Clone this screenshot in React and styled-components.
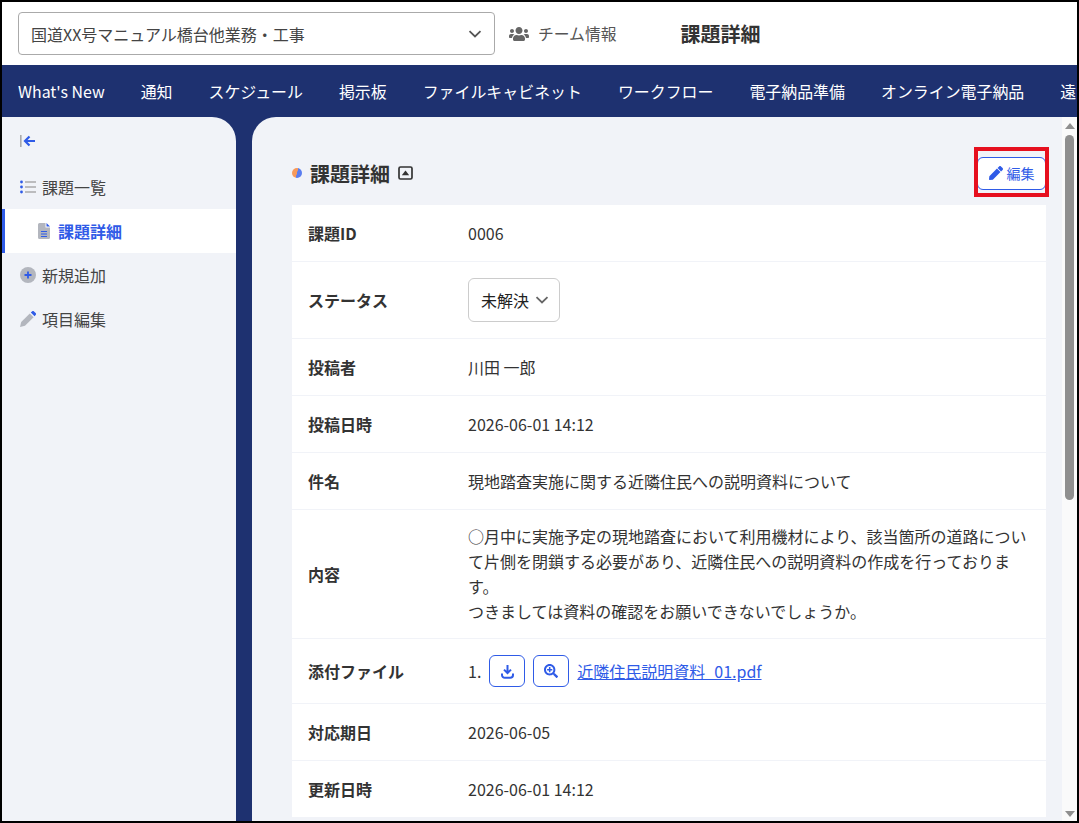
import React from 'react';
import styled, { createGlobalStyle } from 'styled-components';
import { FaUsers, FaPen, FaSearchPlus } from 'react-icons/fa';

const GlobalStyle = createGlobalStyle`
    html, body {
        margin: 0;
        padding: 0;
        background: #fff;
    }
    * {
        box-sizing: border-box;
    }
    body {
        font-family: "Noto Sans CJK JP", "Noto Sans", sans-serif;
        color: #333;
    }
`;

const Frame = styled.div`
    width: 1079px;
    height: 823px;
    border: 2px solid #000;
    overflow: hidden;
    display: flex;
    flex-direction: column;
    background: #1e3170;
`;

const Header = styled.header`
    height: 63px;
    flex: none;
    background: #fff;
    display: flex;
    align-items: center;
    padding: 0 0 0 16px;
`;

const ProjectSelect = styled.div`
    width: 477px;
    height: 43px;
    border: 1px solid #aaa;
    border-radius: 4px;
    display: flex;
    align-items: center;
    justify-content: space-between;
    padding: 0 12px 0 12px;
    font-size: 16px;
    color: #444;
`;

const TeamLink = styled.div`
    margin-left: 14px;
    display: flex;
    align-items: center;
    gap: 9px;
    font-size: 15.8px;
    color: #555;
`;

const PageTitle = styled.div`
    margin-left: 64px;
    font-size: 20px;
    font-weight: 700;
    color: #333;
`;

const Nav = styled.nav`
    height: 52px;
    flex: none;
    display: flex;
    align-items: center;
    padding-left: 16px;
    gap: 36px;
    white-space: nowrap;
    overflow: hidden;
    color: #fff;
    font-size: 15.93px;
    font-weight: 400;
`;

const Body = styled.div`
    flex: 1;
    min-height: 0;
    display: flex;
    gap: 16px;
`;

const Sidebar = styled.aside`
    width: 234px;
    flex: none;
    background: #f1f3f8;
    border-top-right-radius: 24px;
    padding-top: 14px;
    font-size: 16px;
    color: #444;
`;

const Collapse = styled.div`
    height: 20px;
    padding-left: 18px;
    display: flex;
    align-items: center;
    margin-bottom: 14px;
`;

const SideItem = styled.div`
    height: 44px;
    display: flex;
    align-items: center;
    gap: ${p => (p.$active ? '8px' : '6px')};
    padding-left: ${p => (p.$active ? '36px' : '18px')};
    background: ${p => (p.$active ? '#fff' : 'transparent')};
    color: ${p => (p.$active ? '#2f5be7' : '#444')};
    font-weight: ${p => (p.$active ? 700 : 400)};
    box-shadow: ${p => (p.$active ? 'inset 3px 0 0 #2f5be7' : 'none')};
`;

const Main = styled.main`
    flex: 1;
    min-width: 0;
    display: flex;
    background: #f1f3f8;
    border-top-left-radius: 24px;
    overflow: hidden;
`;

const Content = styled.div`
    flex: 1;
    min-width: 0;
    padding: 0 16px 0 40px;
`;

const SectionHead = styled.div`
    position: relative;
    height: 88px;
    display: flex;
    align-items: center;
    padding-top: 24px;
    justify-content: space-between;
`;

const SectionTitle = styled.h2`
    margin: 0;
    display: flex;
    align-items: center;
    font-size: 20px;
    font-weight: 700;
    color: #333;
`;

const TitleDot = styled.span`
    width: 10px;
    height: 10px;
    margin-right: 8px;
    border-radius: 50%;
    background: linear-gradient(105deg, #f79a5c 0 48%, #5a7df0 52% 100%);
`;

const ToggleIcon = styled.span`
    display: flex;
    margin-left: 8px;
`;

const EditButton = styled.button`
    width: 69px;
    height: 33px;
    padding: 0;
    display: flex;
    align-items: center;
    justify-content: center;
    gap: 4px;
    background: #fff;
    border: 1px solid #2f5be7;
    border-radius: 6px;
    color: #2f5be7;
    font-family: inherit;
    font-size: 14px;
`;

const Highlight = styled.div`
    position: absolute;
    right: -3px;
    top: 30px;
    width: 75px;
    height: 50px;
    border: 4px solid #e60f1e;
    pointer-events: none;
`;

const Card = styled.div`
    background: #fff;
`;

const Row = styled.div`
    min-height: ${p => p.$height || 57}px;
    display: flex;
    align-items: center;
    padding: 0 17px 0 16px;
    border-bottom: 1px solid #f1f3f8;
    font-size: 16px;
    color: #333;
`;

const Label = styled.div`
    width: 160px;
    flex: none;
    font-weight: 700;
    color: #333;
`;

const Value = styled.div`
    flex: 1;
    min-width: 0;
    line-height: 25px;
`;

const StatusSelect = styled.div`
    width: 92px;
    height: 44px;
    display: flex;
    align-items: center;
    gap: 6px;
    padding-left: 12px;
    border: 1px solid #ccc;
    border-radius: 6px;
    color: #222;
`;

const Attachment = styled.div`
    display: flex;
    align-items: center;
`;

const IconButton = styled.button`
    width: 36px;
    height: 32px;
    padding: 0;
    margin-right: 8px;
    display: flex;
    align-items: center;
    justify-content: center;
    background: #fff;
    border: 1px solid #2f5be7;
    border-radius: 6px;
    color: #2f5be7;
`;

const Index = styled.span`
    margin-right: 8px;
`;

const FileLink = styled.a`
    color: #2f5be7;
    text-decoration: underline;
`;

const ScrollTrack = styled.div`
    width: 15px;
    flex: none;
    background: #fafafa;
    display: flex;
    flex-direction: column;
    align-items: center;
    padding-top: 6px;
`;

const ScrollThumb = styled.div`
    width: 9px;
    height: 365px;
    margin-top: 6px;
    border-radius: 5px;
    background: #8f8f8f;
`;

const ScrollArrow = styled.div`
    width: 0;
    height: 0;
    border-left: 5px solid transparent;
    border-right: 5px solid transparent;
    border-bottom: ${p => (p.$down ? '0' : '6px solid #8f8f8f')};
    border-top: ${p => (p.$down ? '6px solid #8f8f8f' : '0')};
    margin-top: ${p => (p.$down ? 'auto' : '0')};
    margin-bottom: ${p => (p.$down ? '4px' : '0')};
`;

const Chevron = ({ color }) => (
    <svg width="14" height="8" viewBox="0 0 14 8">
        <path d="M1.5 1.2 7 6.5l5.5-5.3" fill="none" stroke={color} strokeWidth="1.8" />
    </svg>
);

const ToggleGlyph = () => (
    <svg width="15" height="14" viewBox="0 0 15 14">
        <rect x="1" y="1" width="13" height="12" rx="1.5" fill="none" stroke="#333" strokeWidth="1.7" />
        <path d="M3.8 9.2 7.5 4.6l3.7 4.6Z" fill="#333" />
    </svg>
);

const DownloadGlyph = () => (
    <svg width="13" height="15" viewBox="0 0 13 15">
        <path d="M6.5 1v7.5M3 5.6l3.5 3.5L10 5.6" fill="none" stroke="currentColor" strokeWidth="2" />
        <path d="M1 9.5v1.5a2.8 2.8 0 0 0 2.8 2.8h5.4A2.8 2.8 0 0 0 12 11V9.5" fill="none" stroke="currentColor" strokeWidth="2" />
    </svg>
);

const CollapseIcon = () => (
    <svg width="16" height="14" viewBox="0 0 16 14">
        <rect x="0" y="1" width="1.6" height="12" fill="#aaa" />
        <path d="M15 7H5.5M9.5 2.5 5 7l4.5 4.5" fill="none" stroke="#2f5be7" strokeWidth="2.2" />
    </svg>
);

const ListIcon = () => (
    <svg width="16" height="14" viewBox="0 0 16 14">
        <circle cx="1.5" cy="2" r="1.4" fill="#2f5be7" />
        <circle cx="1.5" cy="7" r="1.4" fill="#2f5be7" />
        <circle cx="1.5" cy="12" r="1.4" fill="#2f5be7" />
        <path d="M5 2h11M5 7h11M5 12h11" stroke="#aaa" strokeWidth="1.6" />
    </svg>
);

const DocIcon = () => (
    <svg width="12" height="16" viewBox="0 0 12 16">
        <path d="M1.5 0H7.5V4.5H12V14.5A1.5 1.5 0 0 1 10.5 16H1.5A1.5 1.5 0 0 1 0 14.5V1.5A1.5 1.5 0 0 1 1.5 0Z" fill="#b3b6be" />
        <path d="M8.5 0 12 3.5H8.5Z" fill="#2f5be7" />
        <path d="M3 8.5h6M3 11h6M3 13.5h6" stroke="#2f5be7" strokeWidth="1" />
    </svg>
);

const PlusIcon = () => (
    <svg width="16" height="16" viewBox="0 0 16 16">
        <circle cx="8" cy="8" r="8" fill="#b3b6be" />
        <path d="M8 4.5v7M4.5 8h7" stroke="#2f5be7" strokeWidth="1.8" />
    </svg>
);

const PenIcon = () => (
    <svg width="16" height="16" viewBox="0 0 16 16">
        <path d="M0 16 1.2 11 9.8 2.4 13.6 6.2 5 14.8Z" fill="#b3b6be" />
        <path d="M10.8 1.4 12 .4a1.4 1.4 0 0 1 2 0l1.6 1.6a1.4 1.4 0 0 1 0 2L14.6 5.2Z" fill="#2f5be7" />
    </svg>
);

const navItems = ["What's New", '通知', 'スケジュール', '掲示板', 'ファイルキャビネット', 'ワークフロー', '電子納品準備', 'オンライン電子納品', '遠隔臨場'];

const App = () => {
    return (
        <Frame>
            <GlobalStyle />
            <Header>
                <ProjectSelect>
                    <span>国道XX号マニュアル橋台他業務・工事</span>
                    <Chevron color="#555" />
                </ProjectSelect>
                <TeamLink>
                    <FaUsers size={20} color="#666" />
                    <span>チーム情報</span>
                </TeamLink>
                <PageTitle>課題詳細</PageTitle>
            </Header>
            <Nav>
                {navItems.map(item => <span key={item}>{item}</span>)}
            </Nav>
            <Body>
                <Sidebar>
                    <Collapse><CollapseIcon /></Collapse>
                    <SideItem><ListIcon />課題一覧</SideItem>
                    <SideItem $active><DocIcon />課題詳細</SideItem>
                    <SideItem><PlusIcon />新規追加</SideItem>
                    <SideItem><PenIcon />項目編集</SideItem>
                </Sidebar>
                <Main>
                    <Content>
                        <SectionHead>
                            <SectionTitle>
                                <TitleDot />
                                課題詳細
                                <ToggleIcon><ToggleGlyph /></ToggleIcon>
                            </SectionTitle>
                            <EditButton><FaPen size={14} />編集</EditButton>
                            <Highlight />
                        </SectionHead>
                        <Card>
                            <Row>
                                <Label>課題ID</Label>
                                <Value>0006</Value>
                            </Row>
                            <Row $height={77}>
                                <Label>ステータス</Label>
                                <StatusSelect>未解決<Chevron color="#666" /></StatusSelect>
                            </Row>
                            <Row>
                                <Label>投稿者</Label>
                                <Value>川田 一郎</Value>
                            </Row>
                            <Row>
                                <Label>投稿日時</Label>
                                <Value>2026-06-01 14:12</Value>
                            </Row>
                            <Row>
                                <Label>件名</Label>
                                <Value>現地踏査実施に関する近隣住民への説明資料について</Value>
                            </Row>
                            <Row $height={129}>
                                <Label>内容</Label>
                                <Value>
                                    ○月中に実施予定の現地踏査において利用機材により、該当箇所の道路について片側を閉鎖する必要があり、近隣住民への説明資料の作成を行っております。
                                    <br />
                                    つきましては資料の確認をお願いできないでしょうか。
                                </Value>
                            </Row>
                            <Row $height={65}>
                                <Label>添付ファイル</Label>
                                <Attachment>
                                    <Index>1.</Index>
                                    <IconButton><DownloadGlyph /></IconButton>
                                    <IconButton><FaSearchPlus size={14} /></IconButton>
                                    <FileLink href="#">近隣住民説明資料_01.pdf</FileLink>
                                </Attachment>
                            </Row>
                            <Row>
                                <Label>対応期日</Label>
                                <Value>2026-06-05</Value>
                            </Row>
                            <Row>
                                <Label>更新日時</Label>
                                <Value>2026-06-01 14:12</Value>
                            </Row>
                        </Card>
                    </Content>
                    <ScrollTrack>
                        <ScrollArrow />
                        <ScrollThumb />
                        <ScrollArrow $down />
                    </ScrollTrack>
                </Main>
            </Body>
        </Frame>
    );
};

export default App;
